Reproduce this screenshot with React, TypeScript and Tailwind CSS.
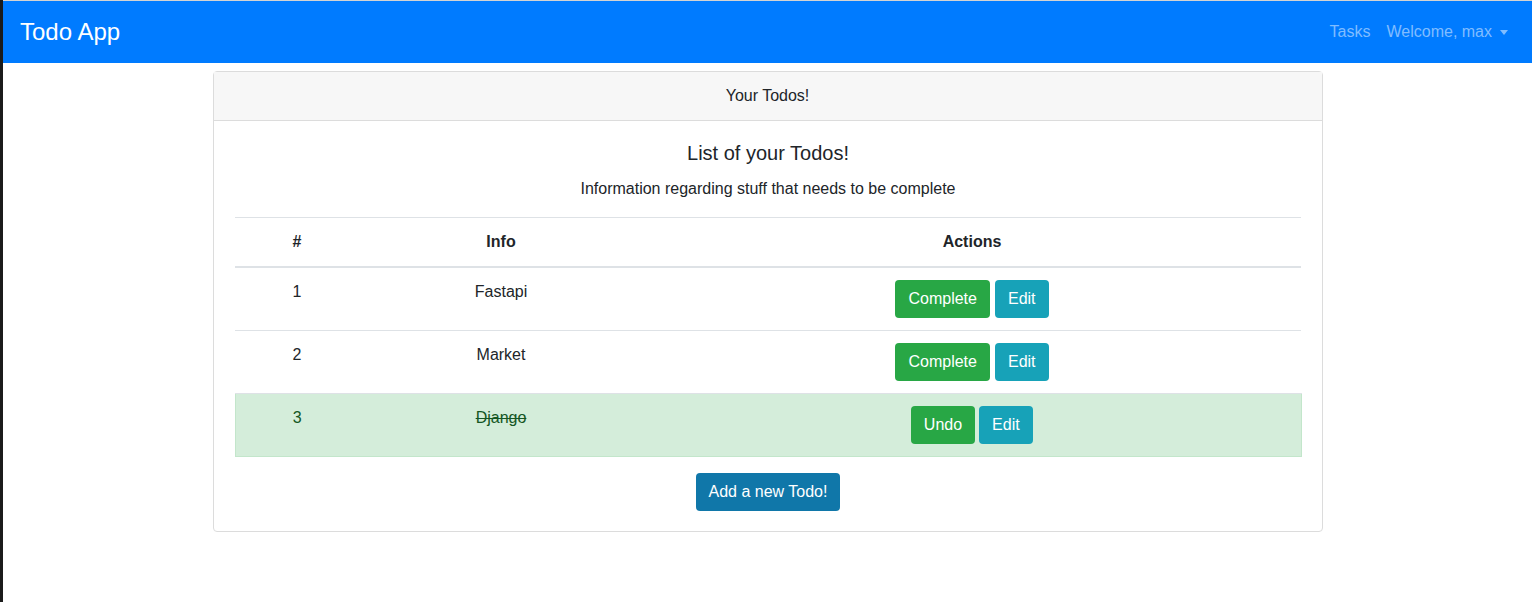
import React from 'react';

interface Todo {
  id: number;
  info: string;
  complete: boolean;
}

const todos: Todo[] = [
  { id: 1, info: 'Fastapi', complete: false },
  { id: 2, info: 'Market', complete: false },
  { id: 3, info: 'Django', complete: true },
];

function App() {
  return (
    <div className="flex min-h-[602px] bg-white font-['Liberation_Sans',Arial,sans-serif] text-[#212529]">
      <div className="w-[3px] shrink-0 bg-[#1b1b1b]" />
      <div className="flex-1 border-t border-[#d3d3d3]">
        {/* navbar */}
        <nav className="flex h-[62px] items-center justify-between bg-[#007bff] pl-[17px] pr-[24px]">
          <span className="text-[24px] leading-none text-white">Todo App</span>
          <div className="flex items-center gap-4 text-[16px] text-[#80bdff]">
            <span>Tasks</span>
            <span className="flex items-center">
              Welcome, max
              <span className="ml-[8px] mt-[1px] inline-block h-0 w-0 border-x-[4px] border-t-[5px] border-x-transparent border-t-[#80bdff]" />
            </span>
          </div>
        </nav>

        <div className="mx-auto mt-[8px] w-[1110px]">
          <div className="rounded border border-[#dcdcdc]">
            <div className="flex h-[49px] items-center justify-center border-b border-[#dcdcdc] bg-[#f7f7f7] text-[16px]">
              Your Todos!
            </div>
            <div className="pb-[20px] pl-[21px] pr-[20px] pt-[20px] text-center">
              <h5 className="text-[20px] leading-[24px]">List of your Todos!</h5>
              <p className="mt-[12px] text-[16px] leading-[24px]">
                Information regarding stuff that needs to be complete
              </p>
              <table className="mt-[16px] w-full border-collapse text-[16px]">
                <thead>
                  <tr className="border-t border-[#dee2e6]">
                    <th className="w-[124px] border-b-2 border-[#dee2e6] py-[12px] font-bold leading-[24px]">#</th>
                    <th className="w-[284px] border-b-2 border-[#dee2e6] py-[12px] font-bold leading-[24px]">Info</th>
                    <th className="border-b-2 border-[#dee2e6] py-[12px] font-bold leading-[24px]">Actions</th>
                  </tr>
                </thead>
                <tbody>
                  {todos.map((t) =>
                    t.complete ? (
                      <tr key={t.id} className="border border-[#c3e6cb] bg-[#d4edda] text-[#155724]">
                        <td className="py-[12px] align-top leading-[24px]">{t.id}</td>
                        <td className="py-[12px] align-top leading-[24px] line-through">{t.info}</td>
                        <td className="py-[12px] align-top">
                          <div className="flex justify-center gap-[4px]">
                            <button className="h-[38px] rounded bg-[#28a745] px-[13px] text-white">Undo</button>
                            <button className="h-[38px] rounded bg-[#17a2b8] px-[13px] text-white">Edit</button>
                          </div>
                        </td>
                      </tr>
                    ) : (
                      <tr key={t.id} className="border-b border-[#dee2e6]">
                        <td className="py-[12px] align-top leading-[24px]">{t.id}</td>
                        <td className="py-[12px] align-top leading-[24px]">{t.info}</td>
                        <td className="py-[12px] align-top">
                          <div className="flex justify-center gap-[5px]">
                            <button className="h-[38px] rounded bg-[#28a745] px-[13px] text-white">Complete</button>
                            <button className="h-[38px] rounded bg-[#17a2b8] px-[13px] text-white">Edit</button>
                          </div>
                        </td>
                      </tr>
                    )
                  )}
                </tbody>
              </table>
              <button className="mt-[16px] h-[38px] rounded bg-[#1077a9] px-[13px] text-[16px] text-white">
                Add a new Todo!
              </button>
            </div>
          </div>
        </div>
      </div>
    </div>
  );
}

export default App;
